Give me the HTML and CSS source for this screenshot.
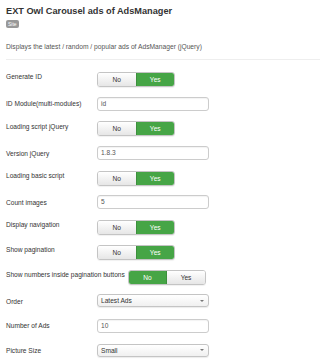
FILE: index.html
```html
<!DOCTYPE html>
<html>
<head>
<meta charset="utf-8">
<link rel="stylesheet" href="styles.css">
</head>
<body>
<div class="page">
  <h1 class="title">EXT Owl Carousel ads of AdsManager</h1>
  <span class="badge">Site</span>
  <p class="desc">Displays the latest / random / popular ads of AdsManager (jQuery)</p>
  <hr class="sep">
  <div class="form">
    <div class="row t"><label class="lbl">Generate ID</label><div class="toggle"><span class="opt">No</span><span class="opt on">Yes</span></div></div>
    <div class="row i"><label class="lbl">ID Module(multi-modules)</label><div class="input">id</div></div>
    <div class="row t"><label class="lbl">Loading script jQuery</label><div class="toggle"><span class="opt">No</span><span class="opt on">Yes</span></div></div>
    <div class="row i"><label class="lbl">Version jQuery</label><div class="input">1.8.3</div></div>
    <div class="row t"><label class="lbl">Loading basic script</label><div class="toggle"><span class="opt">No</span><span class="opt on">Yes</span></div></div>
    <div class="row i"><label class="lbl">Count images</label><div class="input">5</div></div>
    <div class="row t"><label class="lbl">Display navigation</label><div class="toggle"><span class="opt">No</span><span class="opt on">Yes</span></div></div>
    <div class="row t"><label class="lbl">Show pagination</label><div class="toggle"><span class="opt">No</span><span class="opt on">Yes</span></div></div>
    <div class="row t"><label class="lbl">Show numbers inside pagination buttons</label><div class="toggle"><span class="opt on">No</span><span class="opt">Yes</span></div></div>
    <div class="row i"><label class="lbl">Order</label><div class="select">Latest Ads<span class="caret"></span></div></div>
    <div class="row i"><label class="lbl">Number of Ads</label><div class="input">10</div></div>
    <div class="row i"><label class="lbl">Picture Size</label><div class="select">Small<span class="caret"></span></div></div>
  </div>
</div>
</body>
</html>
```

FILE: styles.css
```css
html, body {
  margin: 0;
  padding: 0;
  background: #ffffff;
}
body {
  font-family: "Liberation Sans", Arial, sans-serif;
  color: #333333;
}
.page {
  padding: 5px 0 0 6px;
}
.title {
  margin: 0;
  font-size: 9.2px;
  line-height: 12px;
  font-weight: bold;
  color: #333333;
}
.badge {
  display: inline-block;
  margin-top: 3px;
  height: 8px;
  line-height: 8px;
  padding: 0 2px;
  font-size: 5px;
  color: #ffffff;
  background: #999999;
  border-radius: 2px;
  vertical-align: top;
}
.desc {
  margin: 7px 0 0 0;
  font-size: 6.7px;
  line-height: 9px;
  color: #555555;
}
.sep {
  margin: 8px 0 12px 0;
  border: 0;
  border-top: 1px solid #eeeeee;
  height: 0;
}
.row {
  display: flex;
  align-items: flex-start;
  height: 24.7px;
}
.lbl {
  flex-shrink: 0;
  min-width: 88px;
  padding-right: 3px;
  font-size: 6.6px;
  line-height: 8px;
  color: #333333;
}
.row.t .lbl { padding-top: 1.2px; }
.row.i .lbl { padding-top: 3.5px; }
.toggle {
  display: flex;
  width: 78px;
  height: 15px;
  box-sizing: border-box;
  border: 1px solid #c4c4c4;
  border-radius: 3px;
  overflow: hidden;
  box-shadow: 0 1px 1px rgba(0,0,0,0.06);
}
.opt {
  flex: 1;
  display: flex;
  align-items: center;
  justify-content: center;
  font-size: 6.6px;
  color: #333333;
  background: linear-gradient(#ffffff, #e6e6e6);
}
.opt.on {
  background: #46a546;
  color: #ffffff;
}
.opt + .opt {
  border-left: 1px solid #bdbdbd;
}
.opt.on + .opt, .opt + .opt.on {
  border-left-color: #3d8f3d;
}
.input, .select {
  position: relative;
  width: 112px;
  height: 14px;
  box-sizing: border-box;
  border: 1px solid #cccccc;
  border-radius: 3px;
  padding: 0 3px;
  font-size: 6.6px;
  line-height: 12px;
  color: #555555;
  box-shadow: inset 0 1px 1px rgba(0,0,0,0.05);
}
.select {
  height: 13px;
  line-height: 11px;
  color: #333333;
  background: linear-gradient(#ffffff, #f0f0f0);
  box-shadow: 0 1px 1px rgba(0,0,0,0.08);
  border-color: #c4c4c4;
}
.caret {
  position: absolute;
  right: 4px;
  top: 4.5px;
  width: 0;
  height: 0;
  border-left: 2px solid transparent;
  border-right: 2px solid transparent;
  border-top: 2px solid #777777;
}
```
